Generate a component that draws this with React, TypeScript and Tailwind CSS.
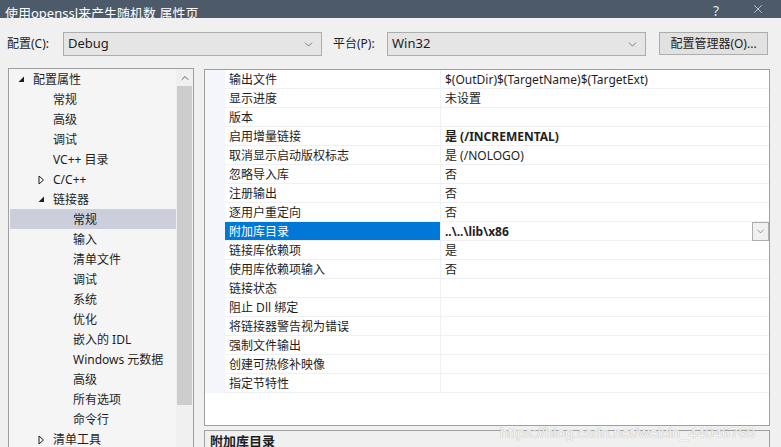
import { ChevronDown, ChevronUp, X } from "lucide-react";

const FONT = { fontFamily: '"Noto Sans", "Noto Sans CJK SC", sans-serif' };

type TreeItem = {
  label: string;
  indent: number;
  arrow?: "open" | "closed";
  selected?: boolean;
};

const TREE: TreeItem[] = [
  { label: "配置属性", indent: 0, arrow: "open" },
  { label: "常规", indent: 1 },
  { label: "高级", indent: 1 },
  { label: "调试", indent: 1 },
  { label: "VC++ 目录", indent: 1 },
  { label: "C/C++", indent: 1, arrow: "closed" },
  { label: "链接器", indent: 1, arrow: "open" },
  { label: "常规", indent: 2, selected: true },
  { label: "输入", indent: 2 },
  { label: "清单文件", indent: 2 },
  { label: "调试", indent: 2 },
  { label: "系统", indent: 2 },
  { label: "优化", indent: 2 },
  { label: "嵌入的 IDL", indent: 2 },
  { label: "Windows 元数据", indent: 2 },
  { label: "高级", indent: 2 },
  { label: "所有选项", indent: 2 },
  { label: "命令行", indent: 2 },
  { label: "清单工具", indent: 1, arrow: "closed" },
];

type Prop = { name: string; value?: string; bold?: boolean; selected?: boolean };

const PROPS: Prop[] = [
  { name: "输出文件", value: "$(OutDir)$(TargetName)$(TargetExt)" },
  { name: "显示进度", value: "未设置" },
  { name: "版本" },
  { name: "启用增量链接", value: "是 (/INCREMENTAL)", bold: true },
  { name: "取消显示启动版权标志", value: "是 (/NOLOGO)" },
  { name: "忽略导入库", value: "否" },
  { name: "注册输出", value: "否" },
  { name: "逐用户重定向", value: "否" },
  { name: "附加库目录", value: "..\\..\\lib\\x86", bold: true, selected: true },
  { name: "链接库依赖项", value: "是" },
  { name: "使用库依赖项输入", value: "否" },
  { name: "链接状态" },
  { name: "阻止 Dll 绑定" },
  { name: "将链接器警告视为错误" },
  { name: "强制文件输出" },
  { name: "创建可热修补映像" },
  { name: "指定节特性" },
];

function Arrow({ kind }: { kind: "open" | "closed" }) {
  if (kind === "open") {
    return (
      <svg width="7" height="7" viewBox="0 0 7 7">
        <path d="M6 0.5 L6 6 L0.5 6 Z" fill="#1e1e1e" />
      </svg>
    );
  }
  return (
    <svg width="7" height="10" viewBox="0 0 7 10">
      <path d="M1 1 L5.5 5 L1 9 Z" fill="none" stroke="#1e1e1e" strokeWidth="1" />
    </svg>
  );
}

function Dropdown({ value, width }: { value: string; width: string }) {
  return (
    <div
      className={`${width} flex h-[24px] items-center justify-between border border-[#adadad] bg-[#e5e5e5] pl-[4px] pr-[6px] pt-[1px] text-[13px] text-[#1e1e1e]`}
    >
      <span>{value}</span>
      <ChevronDown size={13} strokeWidth={1.2} className="text-[#444]" />
    </div>
  );
}

export default function App() {
  return (
    <div
      className="relative h-[447px] w-[781px] overflow-hidden bg-[#f0f0f0] text-[12px] text-[#1e1e1e]"
      style={FONT}
    >
      {/* title bar */}
      <div className="flex h-[18px] items-end justify-between overflow-hidden bg-[#4d5a69] text-white">
        <span className="-mb-[2px] pl-[5px] text-[13px] leading-[13px]">
          使用openssl来产生随机数 属性页
        </span>
        <div className="flex items-end gap-[32px] pr-[16px] text-[14px] leading-[14px] text-[#dfe3e8]">
          <span>?</span>
          <X size={14} strokeWidth={1.3} className="mb-[2px]" />
        </div>
      </div>

      {/* config row */}
      <div className="mt-[13px] flex h-[24px] items-center pt-[1px] text-[12px]">
        <span className="ml-[7px] w-[56px]">配置(C):</span>
        <Dropdown value="Debug" width="w-[259px]" />
        <span className="ml-[11px] w-[54px]">平台(P):</span>
        <Dropdown value="Win32" width="w-[259px]" />
        <div className="ml-[13px] flex h-[23px] w-[109px] items-center justify-center border border-[#adadad] bg-[#e1e1e1]">
          配置管理器(O)...
        </div>
      </div>

      <div className="mt-[13px] flex">
        {/* tree */}
        <div className="ml-[8px] flex h-[400px] w-[186px] border border-[#a0a0a0] bg-[#f5f5f5]">
          <div className="flex-1 pl-[1px]">
            {TREE.map((t, i) => (
              <div
                key={i}
                className={`flex h-[20px] items-center whitespace-nowrap pt-[1px] ${t.selected ? "bg-[#cccedb]" : ""}`}
                style={{ paddingLeft: 8 + t.indent * 20 }}
              >
                <span className="flex w-[15px] items-center">
                  {t.arrow && <Arrow kind={t.arrow} />}
                </span>
                <span>{t.label}</span>
              </div>
            ))}
          </div>
          <div className="flex w-[17px] flex-col bg-[#f0f0f0]">
            <div className="flex h-[17px] items-center justify-center">
              <ChevronUp size={12} strokeWidth={2} className="text-[#606060]" />
            </div>
            <div className="mx-[1px] h-[319px] bg-[#cdcdcd]" />
          </div>
        </div>

        {/* right column */}
        <div className="ml-[10px] flex flex-col">
          <div className="mt-[1px] h-[357px] w-[566px] border border-[#a0a0a0] bg-white">
            {PROPS.map((p, i) => (
              <div key={i} className="flex h-[19px] whitespace-nowrap">
                <div className="w-[20px] bg-[#f4f6fb]" />
                <div
                  className={`flex w-[215px] items-center border-b border-[#eef0f4] pl-[4px] pt-[2px] ${
                    p.selected ? "bg-[#0078d7] text-white" : ""
                  }`}
                >
                  {p.name}
                </div>
                <div className="w-px bg-[#eef0f4]" />
                <div
                  className={`flex flex-1 items-center justify-between border-b border-[#eef0f4] pl-[4px] ${
                    p.bold ? "font-bold" : ""
                  }`}
                >
                  <span className="pt-[2px]">{p.value}</span>
                  {p.selected && (
                    <div className="flex h-[19px] w-[17px] items-center justify-center border border-[#adadad] bg-[#f0f0f0]">
                      <ChevronDown size={11} strokeWidth={1.3} className="text-[#555]" />
                    </div>
                  )}
                </div>
              </div>
            ))}
          </div>
          <div className="mt-[4px] h-[40px] w-[566px] border border-[#a0a0a0] bg-[#f0f0f0] pl-[5px] pt-[1px] text-[13px] font-bold">
            附加库目录
          </div>
        </div>
      </div>

      <span
        className="absolute left-[500px] top-[422px] text-[15px] text-[#f6f6f6]"
        style={{ fontFamily: '"Liberation Sans", sans-serif', textShadow: "0 0 1px #9a9a9a" }}
      >
        https://blog.csdn.net/weixin_44046769
      </span>
    </div>
  );
}
